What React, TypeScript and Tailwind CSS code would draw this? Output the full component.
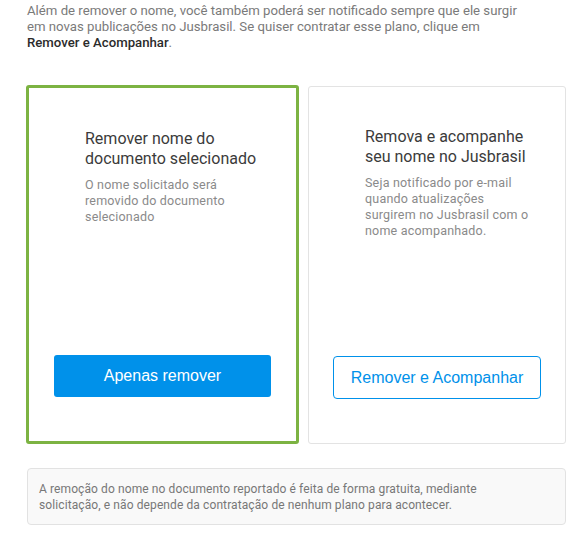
import React from "react";

const roboto = "font-['Roboto','Liberation_Sans',sans-serif]";
const arial = "font-['Liberation_Sans',Arial,sans-serif]";

type PlanCardProps = {
  title: string;
  description: string;
  selected?: boolean;
  children: React.ReactNode;
};

const PlanCard = ({ title, description, selected, children }: PlanCardProps) => {
  return (
    <div
      className={
        selected
          ? "w-[273px] h-[359px] border-[3px] border-[#7cb342] rounded-[3px] flex flex-col pt-[41px] pb-[44px] px-[25px]"
          : "w-[258px] h-[358px] mt-px border border-[#e3e3e3] rounded-[3px] flex flex-col pt-[40px] pb-[44px] px-6"
      }
    >
      <div className={selected ? "pl-[31px]" : "pl-8"}>
        <h3 className="w-[180px] text-[16px] leading-5 text-[#3b3b3b] font-normal">{title}</h3>
        <p className="w-[166px] mt-2 text-[12.5px] leading-4 text-[#8a8a8a] tracking-[0.2px]">
          {description}
        </p>
      </div>
      <div className="mt-auto">{children}</div>
    </div>
  );
};

export default function App() {
  return (
    <div className={`bg-white w-[581px] h-[535px] pl-[26px] ${roboto}`}>
      <div className="w-[540px]">
        <p className="pl-px pt-[3px] w-[500px] text-[13.2px] leading-4 text-[#7a7a7a]">
          Além de remover o nome, você também poderá ser notificado sempre que ele surgir
          <br />
          em novas publicações no Jusbrasil. Se quiser contratar esse plano, clique em
          <br />
          <span className="font-medium text-[#2b2b2b]">Remover e Acompanhar</span>.
        </p>

        <div className="mt-[34px] flex items-start gap-[9px]">
          <PlanCard
            selected
            title="Remover nome do documento selecionado"
            description="O nome solicitado será removido do documento selecionado"
          >
            <button
              className={`w-full h-[42px] rounded-[3px] bg-[#0091ea] text-white text-[16px] ${arial}`}
            >
              Apenas remover
            </button>
          </PlanCard>
          <PlanCard
            title="Remova e acompanhe seu nome no Jusbrasil"
            description="Seja notificado por e-mail quando atualizações surgirem no Jusbrasil com o nome acompanhado."
          >
            <button
              className={`w-full h-[43px] rounded-[4px] border border-[#0091ea] bg-white text-[#0091ea] text-[16px] ${arial}`}
            >
              Remover e Acompanhar
            </button>
          </PlanCard>
        </div>

        <div className="mt-6 ml-px h-[57px] border border-[#e2e2e2] rounded-[4px] bg-[#f9f9f9] pl-[11px] pt-[12px]">
          <p className="w-[460px] text-[12px] leading-4 text-[#777777] tracking-[0.1px]">
            A remoção do nome no documento reportado é feita de forma gratuita, mediante
            solicitação, e não depende da contratação de nenhum plano para acontecer.
          </p>
        </div>
      </div>
    </div>
  );
}
